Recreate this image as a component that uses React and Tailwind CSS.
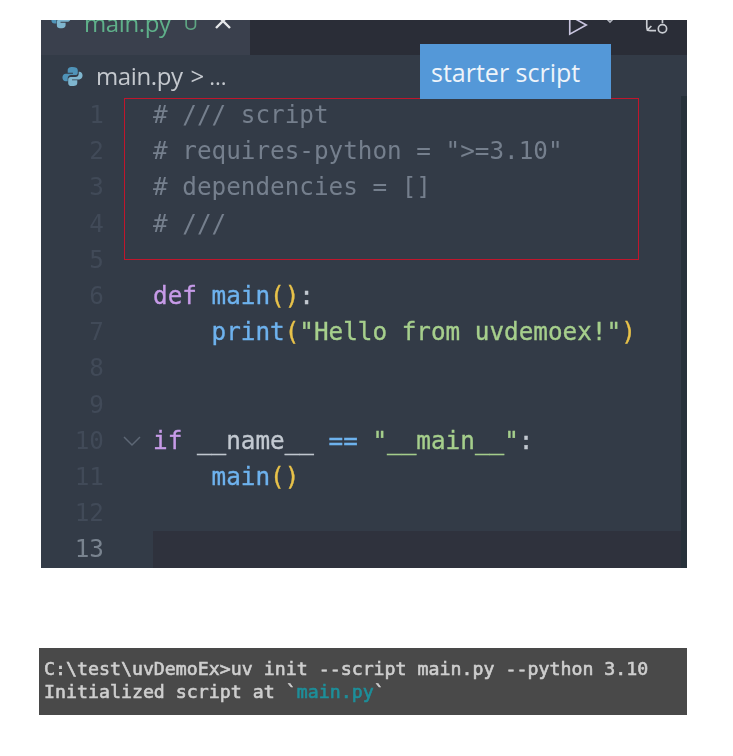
const mono = "font-['DejaVu_Sans_Mono','Liberation_Mono',monospace]";
const sans = "font-['Open_Sans','Noto_Sans',sans-serif]";

function Py({ className }) {
  return (
    <svg viewBox="0 0 24 24" className={className}>
      <path d="M12 2c-4 0-5 1.500-5 3.500V8h5.500v1H5C3 9 1.500 10.500 1.500 13S3 17 5 17h2v-3c0-2 1.500-3.500 3.500-3.500h4.500c1.500 0 2.500-1 2.500-2.500V5.500C17.500 3 15.500 2 12 2z" fill="#4f93b8" />
      <path d="M12 22c4 0 5-1.500 5-3.500V16h-5.500v-1H19c2 0 3.500-1.500 3.500-4S21 7 19 7h-.5v2c0 2-1.500 3.500-3.500 3.500H10c-1.500 0-2.500 1-2.500 2.500v3.500C7.500 21 8.500 22 12 22z" fill="#7fb6cf" />
    </svg>
  );
}

const P = ({ c, children }) => <span className={c}>{children}</span>;
const strong = "[-webkit-text-stroke:0.35px]";

const lines = [
  { n: 1, code: <P c="text-[#757f8d]"># /// script</P> },
  { n: 2, code: <P c="text-[#757f8d]"># requires-python = "&gt;=3.10"</P> },
  { n: 3, code: <P c="text-[#757f8d]"># dependencies = []</P> },
  { n: 4, code: <P c="text-[#757f8d]"># ///</P> },
  { n: 5, code: null },
  {
    n: 6,
    code: (
      <span className={strong}>
        <P c="text-[#c79be8]">def</P> <P c="text-[#6eb2ee]">main</P>
        <P c="text-[#e8c24a]">()</P>
        <P c="text-[#c3c9d1]">:</P>
      </span>
    ),
  },
  {
    n: 7,
    code: (
      <span className={strong}>
        {"    "}
        <P c="text-[#6eb2ee]">print</P>
        <P c="text-[#e8c24a]">(</P>
        <P c="text-[#a6cf8c]">"Hello from uvdemoex!"</P>
        <P c="text-[#e8c24a]">)</P>
      </span>
    ),
  },
  { n: 8, code: null },
  { n: 9, code: null },
  {
    n: 10,
    fold: true,
    code: (
      <span className={strong}>
        <P c="text-[#c79be8]">if</P> <P c="text-[#c3c9d1]">__name__</P> <P c="text-[#6eb2ee]">==</P>{" "}
        <P c="text-[#a6cf8c]">"__main__"</P>
        <P c="text-[#c3c9d1]">:</P>
      </span>
    ),
  },
  {
    n: 11,
    code: (
      <span className={strong}>
        {"    "}
        <P c="text-[#6eb2ee]">main</P>
        <P c="text-[#e8c24a]">()</P>
      </span>
    ),
  },
  { n: 12, code: null },
  { n: 13, code: null, active: true },
];

export default function App() {
  return (
    <div className="relative w-[733px] h-[756px] bg-white pt-5 overflow-hidden">
      <div className="relative ml-[41px] w-[646px] h-[548px] bg-[#333b47] overflow-hidden flex flex-col">
        {/* tab bar */}
        <div className="h-[35px] flex shrink-0 bg-[#2a2d37]">
          <div className={`w-[209px] bg-[#3a404d] flex items-start pl-[9px] ${sans}`}>
            <Py className="w-[22px] h-[22px] -mt-[12px] shrink-0" />
            <span className="ml-[12px] -mt-[13px] text-[24px] tracking-[-0.4px] leading-[32px] text-[#5fb08a] blur-[0.3px]">main.py</span>
            <span className="ml-[13px] -mt-[13px] text-[20px] leading-[32px] text-[#5fa583] blur-[0.3px]">U</span>
            <svg viewBox="0 0 20 20" className="ml-[15px] -mt-[9px] w-[20px] h-[20px]">
              <path d="M3 3l14 14M17 3L3 17" stroke="#e6e8ea" strokeWidth="2.400" fill="none" />
            </svg>
          </div>
          <div className="flex-1 flex justify-end items-start pr-[19px]">
            <svg viewBox="0 0 24 24" className="w-[22px] h-[24px] -mt-[7px]">
              <path d="M3 2v20l18-10z" stroke="#c9c5df" strokeWidth="1.800" fill="none" />
            </svg>
            <svg viewBox="0 0 16 16" className="ml-[13px] w-[16px] h-[16px] -mt-[9px]">
              <path d="M2 5l6 6 6-6" stroke="#b5b8c2" strokeWidth="1.600" fill="none" />
            </svg>
            <svg viewBox="0 0 26 26" className="ml-[26px] w-[24px] h-[24px] -mt-[6px]">
              <path d="M3 0v14c0 3 2 4 4 4h6M8 13l-5 5M20 0v10" stroke="#c9ccd2" strokeWidth="1.800" fill="none" />
              <circle cx="20" cy="16" r="4.500" stroke="#c9ccd2" strokeWidth="1.800" fill="none" />
            </svg>
          </div>
        </div>
        {/* breadcrumb */}
        <div className={`h-[42px] shrink-0 flex items-center pl-[20px] ${sans} text-[#c4c8ce] blur-[0.3px]`}>
          <Py className="w-[23px] h-[23px] shrink-0" />
          <span className="ml-[12px] text-[24px] tracking-[-0.4px] leading-[30px]">main.py</span>
          <span className="ml-[8px] text-[24px] leading-[30px]">&gt;</span>
          <span className="ml-[5px] text-[22px] leading-[30px]">...</span>
        </div>
        {/* code */}
        <div className={`flex-1 ${mono} text-[24.300px] leading-[36.200px] blur-[0.3px]`}>
          {lines.map((l) => (
            <div key={l.n} className={`flex ${l.active ? "h-[38px]" : "h-[36.200px]"}`}>
              <span className={`w-[63px] text-right shrink-0 ${l.active ? "text-[#79838f]" : "text-[#414a58]"}`}>{l.n}</span>
              <span className="w-[49px] shrink-0 flex items-center pl-[18px]">
                {l.fold && (
                  <svg viewBox="0 0 20 12" className="w-[20px] h-[12px]">
                    <path d="M2 2l8 8 8-8" stroke="#5d6775" strokeWidth="1.500" fill="none" />
                  </svg>
                )}
              </span>
              <span className={`flex-1 whitespace-pre ${l.active ? "bg-[#2f323d]" : ""}`}>{l.code}</span>
            </div>
          ))}
        </div>
        {/* scrollbar */}
        <div className="absolute right-0 top-[76px] bottom-0 w-[6px] bg-[#27313a]" />
      </div>

      {/* red selection box */}
      <div className="absolute left-[124px] top-[98px] w-[515px] h-[162px] border border-[#c0162c]" />
      {/* blue label */}
      <div className={`absolute left-[420px] top-[44px] w-[191px] h-[55px] bg-[#5498d8] text-[#eef4fa] pl-[11px] pt-[10px] text-[25px] leading-[36px] ${sans}`}>
        starter script
      </div>

      {/* terminal */}
      <div className={`mt-[80px] ml-[39px] w-[648px] h-[67px] bg-[#494949] pl-[5px] pt-[9px] ${mono} text-[18.250px] leading-[23px] text-[#cfcfcf] [-webkit-text-stroke:0.6px] blur-[0.3px] whitespace-pre`}>
        <div>C:\test\uvDemoEx&gt;uv init --script main.py --python 3.10</div>
        <div>
          Initialized script at `<span className="text-[#1d8f9a]">main.py</span>`
        </div>
      </div>
    </div>
  );
}
